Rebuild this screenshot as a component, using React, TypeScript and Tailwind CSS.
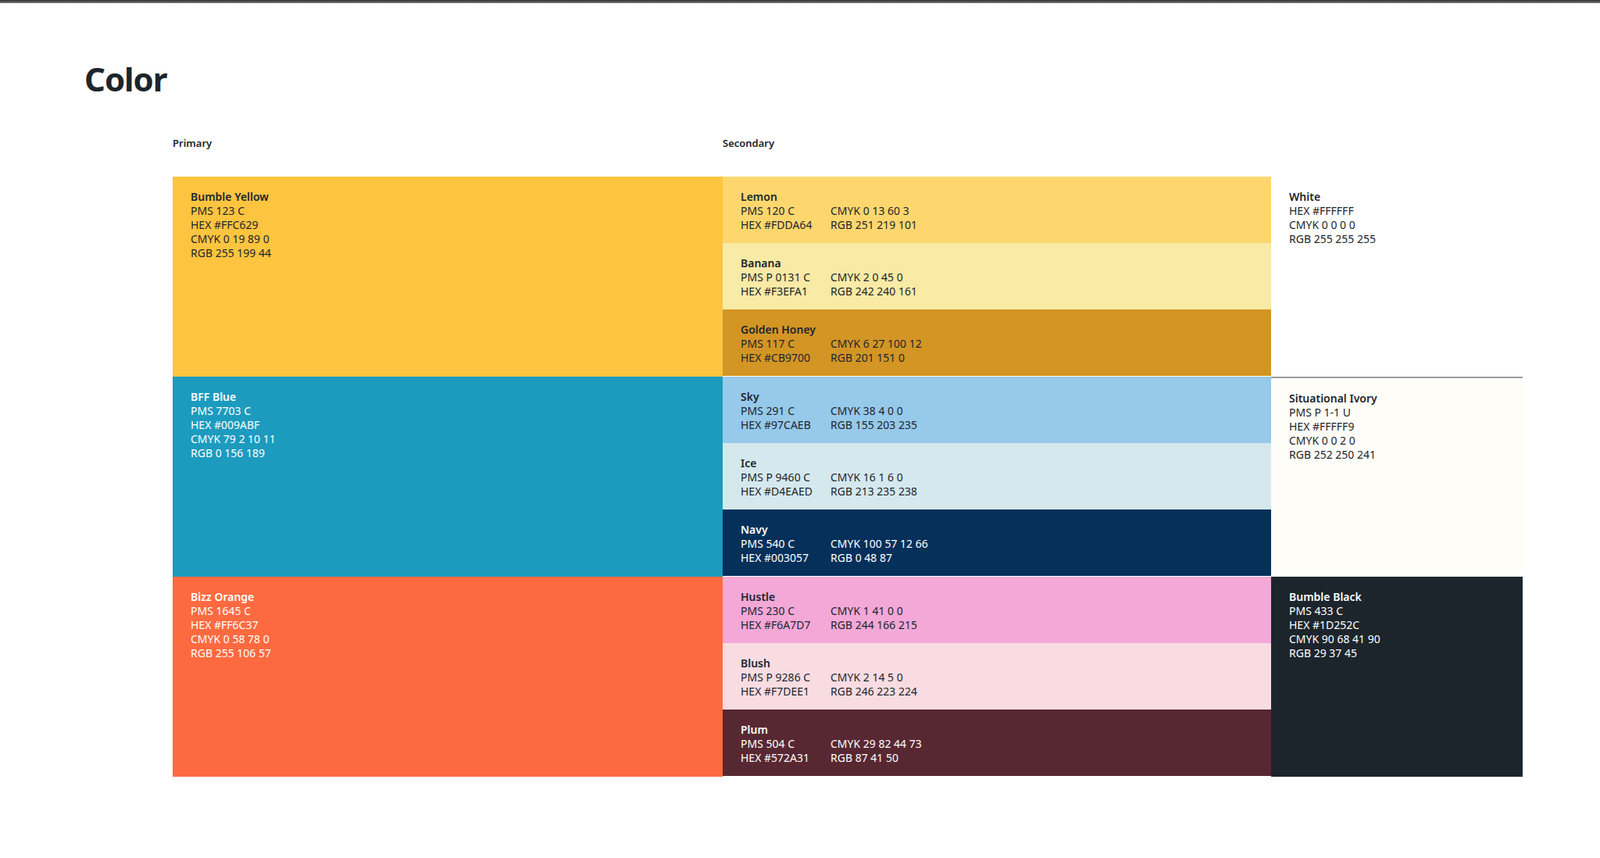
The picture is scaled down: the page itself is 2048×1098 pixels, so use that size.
type Swatch = { name: string; lines: string[]; right?: string[]; bg: string; text: string };

const primary: Swatch[] = [
  { name: "Bumble Yellow", lines: ["PMS 123 C", "HEX #FFC629", "CMYK 0 19 89 0", "RGB 255 199 44"], bg: "bg-[#fdc43f]", text: "text-[#1d252c]" },
  { name: "BFF Blue", lines: ["PMS 7703 C", "HEX #009ABF", "CMYK 79 2 10 11", "RGB 0 156 189"], bg: "bg-[#1c9bbf]", text: "text-white" },
  { name: "Bizz Orange", lines: ["PMS 1645 C", "HEX #FF6C37", "CMYK 0 58 78 0", "RGB 255 106 57"], bg: "bg-[#fe6a40]", text: "text-white" },
];

const secondary: Swatch[][] = [
  [
    { name: "Lemon", lines: ["PMS 120 C", "HEX #FDDA64"], right: ["CMYK 0 13 60 3", "RGB 251 219 101"], bg: "bg-[#fdd76d]", text: "text-[#1d252c]" },
    { name: "Banana", lines: ["PMS P 0131 C", "HEX #F3EFA1"], right: ["CMYK 2 0 45 0", "RGB 242 240 161"], bg: "bg-[#f9eaa5]", text: "text-[#1d252c]" },
    { name: "Golden Honey", lines: ["PMS 117 C", "HEX #CB9700"], right: ["CMYK 6 27 100 12", "RGB 201 151 0"], bg: "bg-[#d39524]", text: "text-[#1d252c]" },
  ],
  [
    { name: "Sky", lines: ["PMS 291 C", "HEX #97CAEB"], right: ["CMYK 38 4 0 0", "RGB 155 203 235"], bg: "bg-[#96c9ea]", text: "text-[#1d252c]" },
    { name: "Ice", lines: ["PMS P 9460 C", "HEX #D4EAED"], right: ["CMYK 16 1 6 0", "RGB 213 235 238"], bg: "bg-[#d5e8ee]", text: "text-[#1d252c]" },
    { name: "Navy", lines: ["PMS 540 C", "HEX #003057"], right: ["CMYK 100 57 12 66", "RGB 0 48 87"], bg: "bg-[#05305a]", text: "text-white" },
  ],
  [
    { name: "Hustle", lines: ["PMS 230 C", "HEX #F6A7D7"], right: ["CMYK 1 41 0 0", "RGB 244 166 215"], bg: "bg-[#f3a8d8]", text: "text-[#1d252c]" },
    { name: "Blush", lines: ["PMS P 9286 C", "HEX #F7DEE1"], right: ["CMYK 2 14 5 0", "RGB 246 223 224"], bg: "bg-[#f9dce2]", text: "text-[#1d252c]" },
    { name: "Plum", lines: ["PMS 504 C", "HEX #572A31"], right: ["CMYK 29 82 44 73", "RGB 87 41 50"], bg: "bg-[#582832]", text: "text-white" },
  ],
];

const neutral: Swatch[] = [
  { name: "White", lines: ["HEX #FFFFFF", "CMYK 0 0 0 0", "RGB 255 255 255"], bg: "bg-white", text: "text-[#1d252c]" },
  { name: "Situational Ivory", lines: ["PMS P 1-1 U", "HEX #FFFFF9", "CMYK 0 0 2 0", "RGB 252 250 241"], bg: "bg-[#fffdf8] border-t-2 border-[#9a9a9a]", text: "text-[#1d252c]" },
  { name: "Bumble Black", lines: ["PMS 433 C", "HEX #1D252C", "CMYK 90 68 41 90", "RGB 29 37 45"], bg: "bg-[#1d252c]", text: "text-white" },
];

function Block({ s, two }: { s: Swatch; two?: boolean }) {
  return (
    <div className={`${s.bg} ${s.text} flex-1 px-[23px] pt-[17px] text-[14px] leading-[18px]`}>
      <div className="font-semibold">{s.name}</div>
      {two ? (
        <div className="flex">
          <div className="w-[115px]">{s.lines.map((l) => <div key={l}>{l}</div>)}</div>
          <div>{s.right!.map((l) => <div key={l}>{l}</div>)}</div>
        </div>
      ) : (
        s.lines.map((l) => <div key={l}>{l}</div>)
      )}
    </div>
  );
}

export default function App() {
  return (
    <div className="min-h-screen bg-white font-['Inter',sans-serif] text-[#1d252c]">
      <div className="h-[4px] bg-gradient-to-b from-[#333] to-[#777]" />
      <h1 className="pl-[108px] pt-[76px] text-[42px] leading-none font-bold tracking-tight">Color</h1>
      <div className="pl-[221px] pt-[52px]">
        <div className="flex text-[13px] font-semibold">
          <div className="w-[704px]">Primary</div>
          <div>Secondary</div>
        </div>
        <div className="mt-[32px] flex w-[1728px]">
          <div className="flex w-[704px] flex-col">
            {primary.map((s) => (
              <div key={s.name} className="flex h-[256px]"><Block s={s} /></div>
            ))}
          </div>
          <div className="flex w-[702px] flex-col">
            {secondary.map((g, i) => (
              <div key={i} className="flex h-[256px] flex-col">
                {g.map((s) => <Block key={s.name} s={s} two />)}
              </div>
            ))}
          </div>
          <div className="flex w-[322px] flex-col">
            {neutral.map((s) => (
              <div key={s.name} className="flex h-[256px]"><Block s={s} /></div>
            ))}
          </div>
        </div>
      </div>
    </div>
  );
}
